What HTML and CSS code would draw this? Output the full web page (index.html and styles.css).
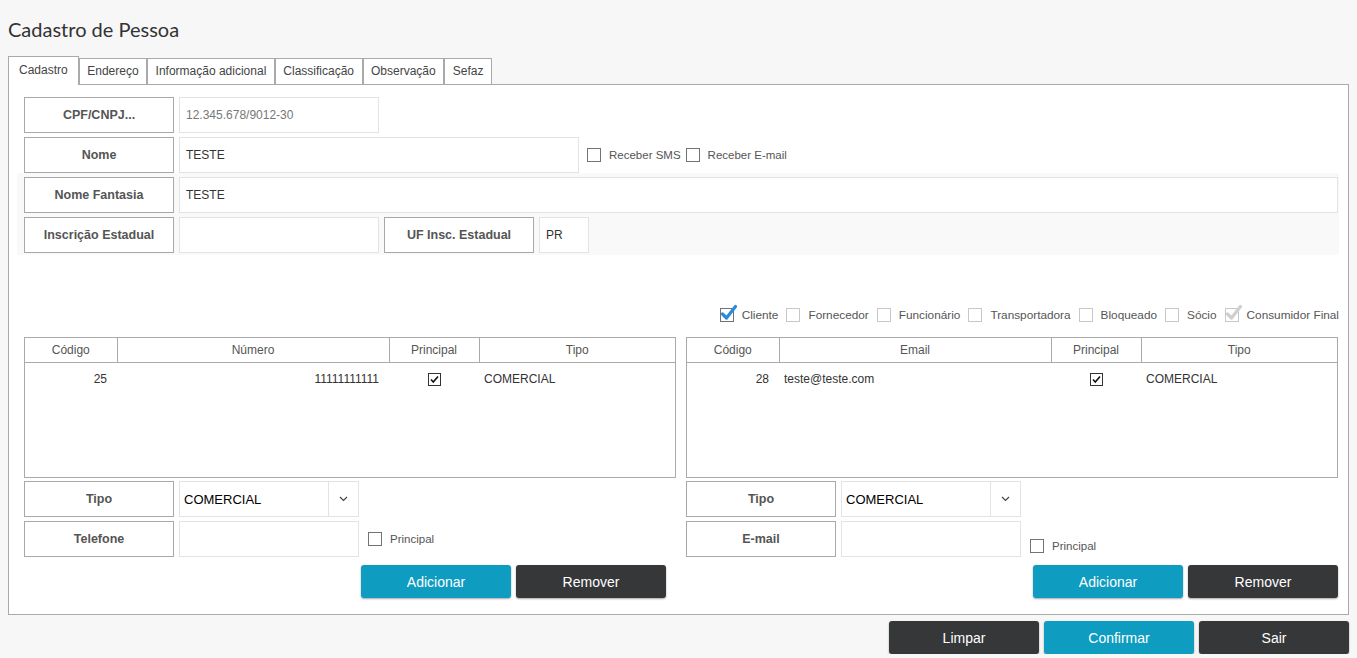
FILE: index.html
```html
<!DOCTYPE html>
<html lang="pt-BR">
<head>
<meta charset="utf-8">
<title>Cadastro de Pessoa</title>
<link rel="stylesheet" href="styles.css">
</head>
<body>
<div class="page">
  <h1 class="title">Cadastro de Pessoa</h1>
  <div class="tabs">
    <div class="tab active">Cadastro</div>
    <div class="tab">Endereço</div>
    <div class="tab">Informação adicional</div>
    <div class="tab">Classificação</div>
    <div class="tab">Observação</div>
    <div class="tab">Sefaz</div>
  </div>
  <div class="panel">
    <div class="row">
      <div class="lbl">CPF/CNPJ...</div>
      <div class="inp w200 muted">12.345.678/9012-30</div>
    </div>
    <div class="row">
      <div class="lbl">Nome</div>
      <div class="inp w400">TESTE</div>
      <label class="chk first"><span class="box dark"></span>Receber SMS</label>
      <label class="chk"><span class="box dark"></span>Receber E-mail</label>
    </div>
    <div class="group">
      <div class="row">
        <div class="lbl">Nome Fantasia</div>
        <div class="inp grow">TESTE</div>
      </div>
      <div class="row">
        <div class="lbl">Inscrição Estadual</div>
        <div class="inp w200"></div>
        <div class="lbl">UF Insc. Estadual</div>
        <div class="inp w50">PR</div>
      </div>
    </div>

    <div class="flags">
      <label class="chk"><span class="box dark"><svg class="bigcheck" width="20" height="20" viewBox="0 0 20 20"><path d="M3.5 11 L7.5 15 L16.5 3.5" fill="none" stroke="#2a8bd8" stroke-width="3.2" stroke-linecap="round" stroke-linejoin="round"/></svg></span>Cliente</label>
      <label class="chk"><span class="box light"></span>Fornecedor</label>
      <label class="chk"><span class="box light"></span>Funcionário</label>
      <label class="chk"><span class="box light"></span>Transportadora</label>
      <label class="chk"><span class="box light"></span>Bloqueado</label>
      <label class="chk"><span class="box light"></span>Sócio</label>
      <label class="chk"><span class="box light"><svg class="bigcheck" width="20" height="20" viewBox="0 0 20 20"><path d="M3.5 11 L7.5 15 L16.5 3.5" fill="none" stroke="#cfcfcf" stroke-width="3.2" stroke-linecap="round" stroke-linejoin="round"/></svg></span>Consumidor Final</label>
    </div>

    <div class="cols">
      <div class="col">
        <div class="tbl">
          <table>
            <colgroup><col class="c1"><col class="c2"><col class="c3"><col></colgroup>
            <thead><tr><th>Código</th><th>Número</th><th>Principal</th><th>Tipo</th></tr></thead>
            <tbody><tr>
              <td class="num">25</td>
              <td class="num">11111111111</td>
              <td class="ctr"><span class="tcheck"><svg width="13" height="13" viewBox="0 0 13 13"><rect x="0.5" y="0.5" width="12" height="12" fill="#fff" stroke="#333"/><path d="M3 6.5 L5.3 9 L10 3.5" fill="none" stroke="#111" stroke-width="1.6"/></svg></span></td>
              <td class="txt">COMERCIAL</td>
            </tr></tbody>
          </table>
        </div>
        <div class="frow first">
          <div class="lbl">Tipo</div>
          <div class="select">
            <div class="val">COMERCIAL</div>
            <div class="arrow"><svg width="9" height="6" viewBox="0 0 9 6"><path d="M1 1 L4.5 4.5 L8 1" fill="none" stroke="#444" stroke-width="1.2"/></svg></div>
          </div>
        </div>
        <div class="frow">
          <div class="lbl">Telefone</div>
          <div class="inp w180"></div>
          <label class="chk sm"><span class="box dark"></span>Principal</label>
        </div>
        <div class="actions pad">
          <button class="btn blue">Adicionar</button>
          <button class="btn dark">Remover</button>
        </div>
      </div>

      <div class="col">
        <div class="tbl">
          <table>
            <colgroup><col class="c1"><col class="c2"><col class="c3"><col></colgroup>
            <thead><tr><th>Código</th><th>Email</th><th>Principal</th><th>Tipo</th></tr></thead>
            <tbody><tr>
              <td class="num">28</td>
              <td class="txt">teste@teste.com</td>
              <td class="ctr"><span class="tcheck"><svg width="13" height="13" viewBox="0 0 13 13"><rect x="0.5" y="0.5" width="12" height="12" fill="#fff" stroke="#333"/><path d="M3 6.5 L5.3 9 L10 3.5" fill="none" stroke="#111" stroke-width="1.6"/></svg></span></td>
              <td class="txt">COMERCIAL</td>
            </tr></tbody>
          </table>
        </div>
        <div class="frow first">
          <div class="lbl">Tipo</div>
          <div class="select">
            <div class="val">COMERCIAL</div>
            <div class="arrow"><svg width="9" height="6" viewBox="0 0 9 6"><path d="M1 1 L4.5 4.5 L8 1" fill="none" stroke="#444" stroke-width="1.2"/></svg></div>
          </div>
        </div>
        <div class="frow">
          <div class="lbl">E-mail</div>
          <div class="inp w180"></div>
          <label class="chk sm low"><span class="box dark"></span>Principal</label>
        </div>
        <div class="actions">
          <button class="btn blue">Adicionar</button>
          <button class="btn dark">Remover</button>
        </div>
      </div>
    </div>
  </div>
  <div class="footer">
    <button class="btn dark">Limpar</button>
    <button class="btn blue">Confirmar</button>
    <button class="btn dark">Sair</button>
  </div>
</div>
</body>
</html>
```

FILE: styles.css
```css
* { box-sizing: border-box; }

body {
  margin: 0;
  background: #f7f7f7;
  font-family: "Liberation Sans", Arial, sans-serif;
  font-size: 12px;
  color: #333;
}

.page {
  padding: 17px 8px 0 8px;
}

.title {
  margin: 0 0 15px;
  font-family: Lato, "Liberation Sans", sans-serif;
  font-weight: 400;
  font-size: 20px;
  line-height: 24px;
  color: #333;
}

.tabs {
  display: flex;
  align-items: flex-end;
  height: 28px;
  position: relative;
  z-index: 1;
}

.tab {
  height: 26px;
  line-height: 25px;
  padding: 0 7.5px;
  border: 1px solid #aaa;
  border-bottom: none;
  background: #fff;
  color: #444;
  font-size: 12px;
  white-space: nowrap;
}

.tab.active {
  height: 29px;
  line-height: 27px;
  margin-bottom: -1px;
  padding: 0 10px;
}

.panel {
  border: 1px solid #aaa;
  background: #fff;
  padding: 12px 9px 16px 8px;
}

.row {
  display: flex;
  align-items: center;
  gap: 5px;
  height: 36px;
  padding: 0 1px 0 7px;
}

.row + .row { margin-top: 4px; }

.group {
  background: #f9f9f9;
  padding: 4px 0 2px;
}

.lbl {
  flex: none;
  width: 150px;
  height: 36px;
  border: 1px solid #a8a8a8;
  background: #fff;
  display: flex;
  align-items: center;
  justify-content: center;
  font-weight: 700;
  font-size: 12.5px;
  color: #555;
}

.inp {
  flex: none;
  height: 36px;
  border: 1px solid #e3e3e3;
  background: #fff;
  display: flex;
  align-items: center;
  padding: 0 6px;
  font-size: 12px;
  color: #333;
}

.inp.muted { color: #777; }
.w200 { width: 200px; }
.w400 { width: 400px; }
.w180 { width: 180px; }
.w50 { width: 50px; }
.inp.grow { flex: 1; }

.chk {
  display: flex;
  align-items: center;
  gap: 8px;
  color: #555;
  font-size: 11.5px;
  white-space: nowrap;
}

.chk.first { margin-left: 3px; }

.box {
  position: relative;
  flex: none;
  width: 14px;
  height: 14px;
  border: 1px solid #777;
  background: #fff;
}

.box.light { border-color: #c8c8c8; }
.box.dark { border-color: #737373; }

.bigcheck {
  position: absolute;
  left: -2px;
  top: -6px;
}

.flags {
  display: flex;
  justify-content: flex-end;
  align-items: center;
  gap: 8px;
  height: 16px;
  margin-top: 52px;
}

.flags .chk { font-size: 11.8px; }

.cols {
  display: grid;
  grid-template-columns: 1fr 1fr;
  column-gap: 10px;
  margin-top: 14px;
  padding: 0 1px 0 7px;
}

.tbl {
  height: 141px;
  border: 1px solid #aaa;
  background: #fff;
}

.tbl table {
  width: 100%;
  border-collapse: collapse;
  table-layout: fixed;
}

.c1 { width: 92px; }
.c2 { width: 272px; }
.c3 { width: 90px; }

.tbl th {
  height: 24px;
  padding: 0;
  font-weight: 400;
  font-size: 12px;
  color: #555;
  border-right: 1px solid #aaa;
  border-bottom: 1px solid #aaa;
  text-align: center;
}

.tbl th:last-child { border-right: none; }

.tbl td {
  height: 33px;
  padding: 0 5px;
  font-size: 12px;
  color: #333;
  white-space: nowrap;
}

.tbl td.num { text-align: right; padding-right: 10px; }
.tbl td.ctr { text-align: center; }
.tbl td.txt { text-align: left; }

.tcheck {
  display: inline-block;
  width: 13px;
  height: 13px;
  vertical-align: middle;
}

.tcheck svg { display: block; }

.frow {
  display: flex;
  align-items: center;
  gap: 5px;
  height: 36px;
  margin-top: 4px;
}

.frow.first { margin-top: 3px; }

.select {
  flex: none;
  width: 180px;
  height: 36px;
  border: 1px solid #e3e3e3;
  background: #fff;
  display: flex;
}

.select .val {
  flex: 1;
  display: flex;
  align-items: center;
  padding-left: 4px;
  font-size: 13px;
  color: #000;
}

.select .arrow {
  width: 30px;
  border-left: 1px solid #e3e3e3;
  display: flex;
  align-items: center;
  justify-content: center;
}

.chk.sm { margin-left: 4px; }
.chk.low { align-self: flex-end; margin-bottom: 4px; }

.actions {
  display: flex;
  justify-content: flex-end;
  gap: 5px;
  margin-top: 8px;
}

.actions.pad { padding-right: 10px; }

.btn {
  width: 150px;
  height: 33px;
  border: none;
  border-radius: 3px;
  color: #fff;
  font-family: "Liberation Sans", Arial, sans-serif;
  font-size: 14px;
  box-shadow: 0 1px 2px rgba(0, 0, 0, 0.35);
  padding: 0;
}

.btn.blue { background: #0e9cc0; }
.btn.dark { background: #363739; }

.footer {
  display: flex;
  justify-content: flex-end;
  gap: 5px;
  margin-top: 6px;
}
```
